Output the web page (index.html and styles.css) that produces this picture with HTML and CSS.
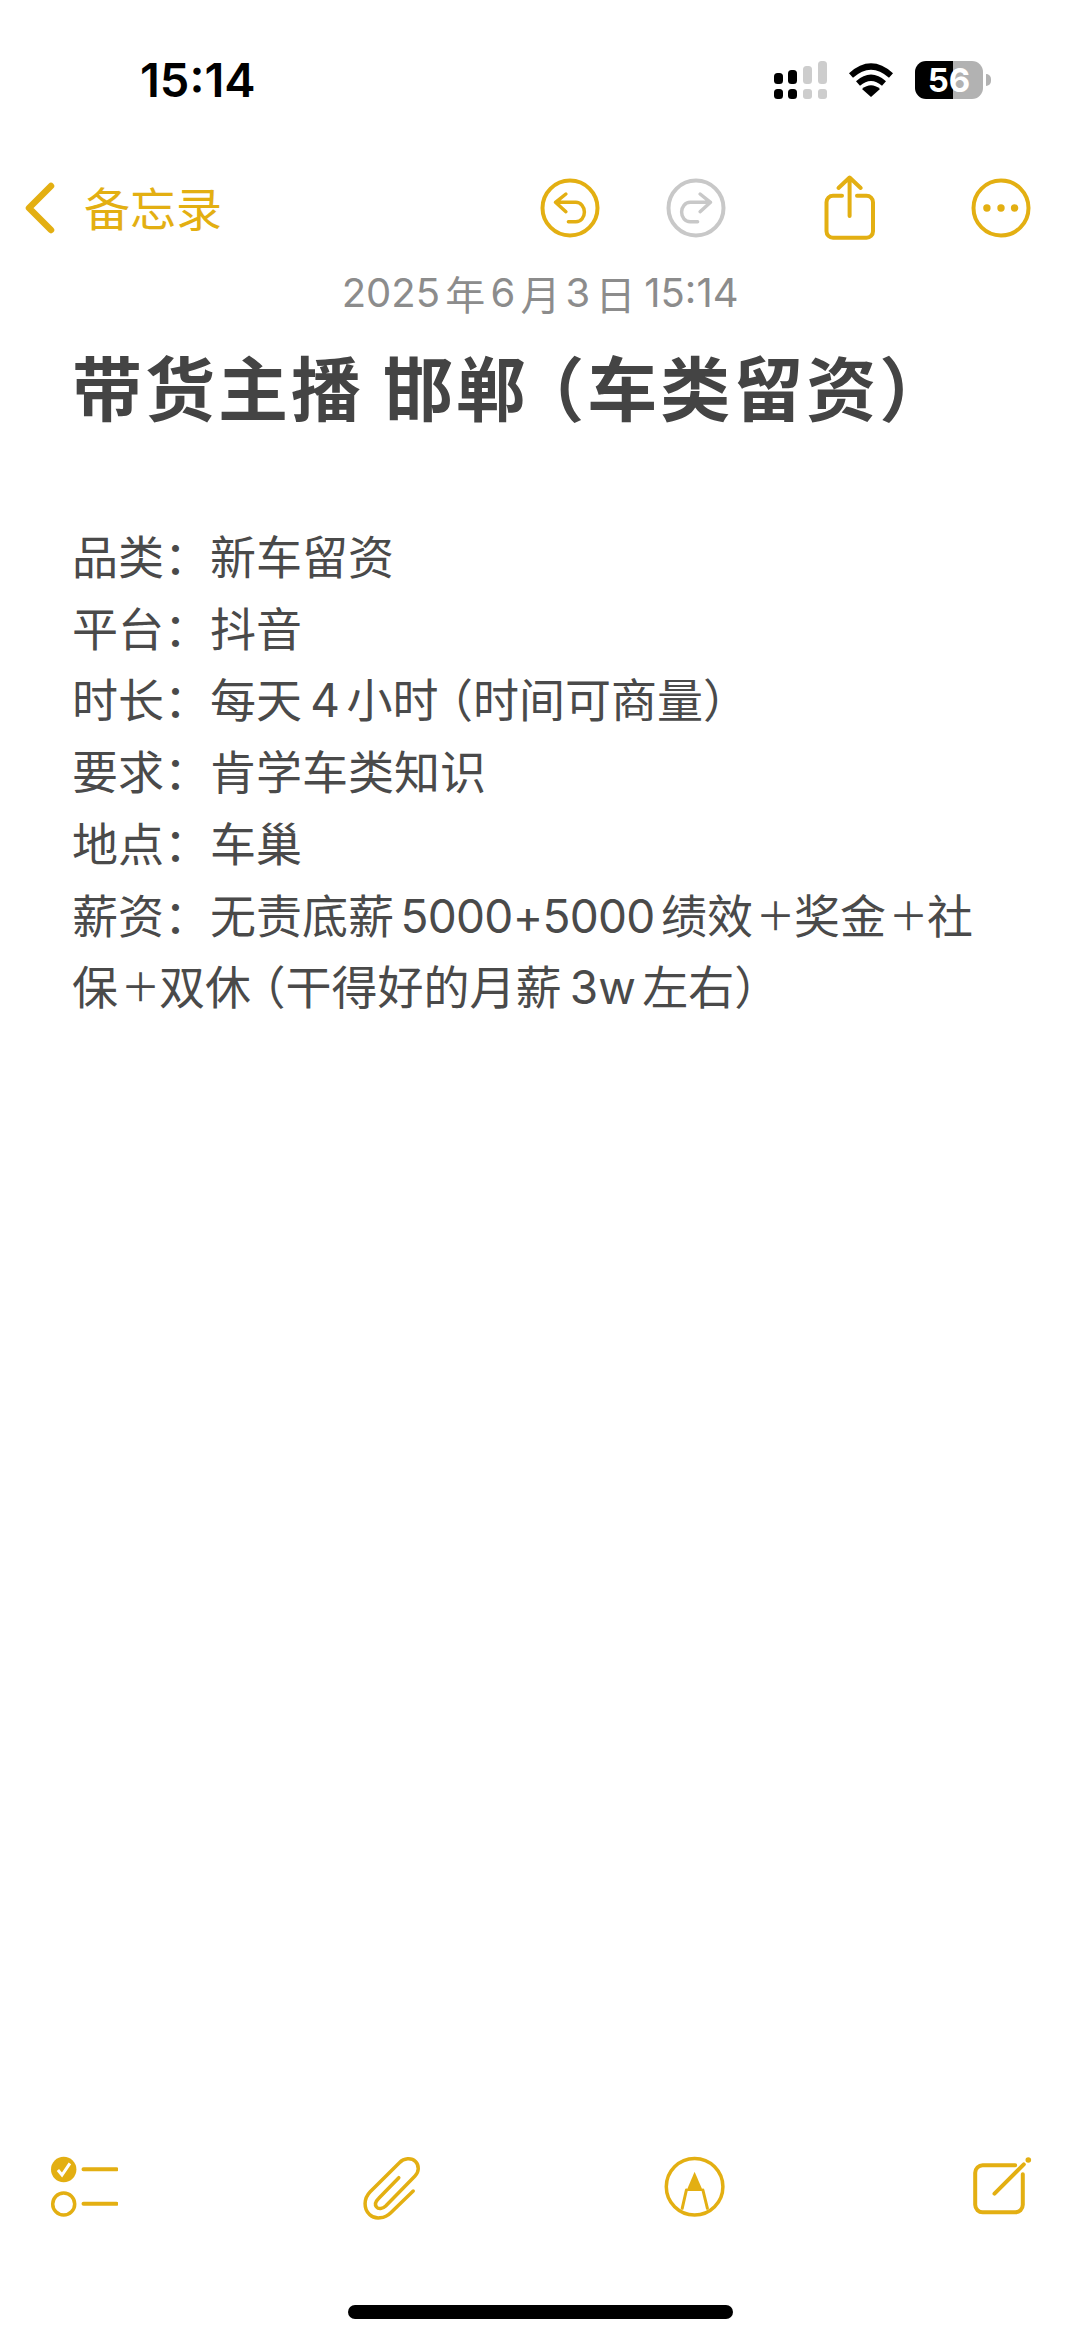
FILE: index.html
```html
<!DOCTYPE html>
<html lang="zh-CN">
<head>
<meta charset="utf-8">
<title>备忘录</title>
<link rel="stylesheet" href="styles.css">
</head>
<body>
<div class="screen">
  <header class="status">
    <span class="clock">15:14</span>
    <div class="indicators">
      <svg class="signal" width="54" height="40" viewBox="0 0 54 40">
        <rect x="0" y="12" width="9" height="11" rx="3.5"/>
        <rect x="14" y="9" width="9" height="14" rx="3.5"/>
        <rect class="dim" x="29" y="5" width="9" height="18" rx="3.5"/>
        <rect class="dim" x="44" y="0" width="9" height="23" rx="3.5"/>
        <rect x="0" y="28" width="9" height="10" rx="3.5"/>
        <rect x="14" y="28" width="9" height="10" rx="3.5"/>
        <rect class="dim" x="29" y="28" width="9" height="10" rx="3"/>
        <rect class="dim" x="44" y="28" width="9" height="10" rx="3"/>
      </svg>
      <svg class="wifi" width="46" height="34" viewBox="0 0 46 34">
        <path d="M3 12.5Q23 -5.5 43 12.5" fill="none" stroke="#000" stroke-width="6"/>
        <path d="M10 20.5Q23 9 36 20.5" fill="none" stroke="#000" stroke-width="6"/>
        <path d="M23 34L14 26Q23 18.500 32 26Z"/>
      </svg>
      <div class="battery"><span class="level">56</span></div>
      <span class="battery-tip"></span>
    </div>
  </header>

  <nav class="nav">
    <div class="back">
      <svg width="32" height="52" viewBox="0 0 32 52"><path class="stroke" d="M27 4L5 26L27 48" stroke-width="6.500"/></svg>
      <span class="back-label">备忘录</span>
    </div>
    <div class="actions">
      <svg class="undo" width="60" height="60" viewBox="0 0 60 60">
        <circle class="stroke" cx="30" cy="30" r="27.500" stroke-width="4"/>
        <path class="stroke" stroke-width="3.500" d="M25.900 16L15.500 24.300L25.900 33.700M15.500 24.300H35.800C41 24.300 44.400 29 44.400 34C44.400 39.500 41 43.700 35.800 43.700H28.400"/>
      </svg>
      <svg class="redo" width="60" height="60" viewBox="0 0 60 60">
        <circle class="stroke-off" cx="30" cy="30" r="27.500" stroke-width="4"/>
        <path class="stroke-off" stroke-width="3.500" d="M34.100 16L44.500 24.300L34.100 33.700M44.500 24.300H24.200C19 24.300 15.600 29 15.600 34C15.600 39.500 19 43.700 24.200 43.700H31.600"/>
      </svg>
      <svg class="share" width="54" height="68" viewBox="0 0 54 68">
        <path class="stroke" stroke-width="4" d="M19 21.700H10A6.500 6.500 0 0 0 3.500 28.200V57.200A6.500 6.500 0 0 0 10 63.700H43.500A6.500 6.500 0 0 0 50 57.200V28.200A6.500 6.500 0 0 0 43.500 21.700H34"/>
        <path class="stroke" stroke-width="4" d="M26.600 4V42M15.500 14L26.600 3.500L37.700 14"/>
      </svg>
      <svg class="more" width="60" height="60" viewBox="0 0 60 60">
        <circle class="stroke" cx="30" cy="30" r="27.500" stroke-width="4"/>
        <circle class="fill" cx="15.900" cy="30" r="3.700"/>
        <circle class="fill" cx="30" cy="30" r="3.700"/>
        <circle class="fill" cx="43.600" cy="30" r="3.700"/>
      </svg>
    </div>
  </nav>

  <div class="date"><span class="num">2025</span>年<span class="num">6</span>月<span class="num">3</span>日<span class="num time">15:14</span></div>

  <h1 class="title">带货主播 邯郸<span class="open">（</span>车类留资）</h1>

  <main class="note">
    <p>品类<span class="colon">：</span>新车留资</p>
    <p>平台<span class="colon">：</span>抖音</p>
    <p>时长<span class="colon">：</span>每天<span class="num">4</span>小时<span class="open">（</span>时间可商量）</p>
    <p>要求<span class="colon">：</span>肯学车类知识</p>
    <p>地点<span class="colon">：</span>车巢</p>
    <p>薪资<span class="colon">：</span>无责底薪<span class="num figures">5000+5000</span>绩效<span class="plus">＋</span>奖金<span class="plus">＋</span>社保<span class="plus">＋</span>双休<span class="open">（</span>干得好的月薪<span class="num">3w</span>左右）</p>
  </main>

  <footer class="toolbar">
    <svg class="tool-list" width="68" height="62" viewBox="0 0 68 62">
      <circle class="fill" cx="13.700" cy="13.500" r="12.700"/>
      <path d="M7.900 14L12 19L19.900 7.300" fill="none" stroke="#fff" stroke-width="3"/>
      <circle class="stroke" cx="13.700" cy="48" r="11" stroke-width="3.500"/>
      <path class="stroke" stroke-width="4" d="M33.500 13.300H66.500M33.500 47.700H66.500"/>
    </svg>
    <svg class="tool-clip" width="60" height="66" viewBox="0 0 60 66">
      <path class="stroke" stroke-width="3.500" d="M51.200 35L28.800 56.700C23 62.500 13 64 7.500 58.500C1.500 53 1.500 42.500 8.200 35.700L37.400 6.700C42 2 49.500 1.500 53.500 5.500C57.500 9.500 57 16 53 20L23.700 50C20.500 53 16.500 53.500 14.500 51C12.500 48.500 13.500 45.500 16.800 42.300L36.800 21.700"/>
    </svg>
    <svg class="tool-markup" width="62" height="62" viewBox="0 0 62 62">
      <circle class="stroke" cx="30.600" cy="30.700" r="28.300" stroke-width="3.500"/>
      <path class="fill" d="M30.600 15.700L38.900 35H22.400Z"/>
      <path class="stroke" stroke-width="3" d="M22.400 34L18.200 52.300M38.900 34L43.400 52.300"/>
    </svg>
    <svg class="tool-compose" width="62" height="60" viewBox="0 0 62 60">
      <path class="stroke" stroke-width="4" d="M43.200 9.300H11A7.500 7.500 0 0 0 3.200 16.800V48.800A7.500 7.500 0 0 0 11 56.300H43A7.500 7.500 0 0 0 50.800 48.800V18.300"/>
      <path class="stroke" stroke-width="4" d="M22.500 37.700L51.800 8.300"/>
      <circle class="fill" cx="56.300" cy="4" r="2.800"/>
    </svg>
  </footer>

  <div class="home-row"><span class="home-bar"></span></div>
</div>
</body>
</html>
```

FILE: styles.css
```css
* { box-sizing: border-box; }

html, body { margin: 0; padding: 0; background: #fff; }

.screen {
  width: 1080px;
  height: 2341px;
  display: flex;
  flex-direction: column;
  overflow: hidden;
  font-family: "Noto Sans CJK SC", "Liberation Sans", sans-serif;
  background: #fff;
}

/* status bar */
.status {
  height: 160px;
  flex: none;
  display: flex;
  align-items: flex-start;
  justify-content: space-between;
  padding: 50px 89px 0 140px;
}

.clock {
  font-family: Inter, sans-serif;
  font-size: 47px;
  line-height: 60px;
  font-weight: 600;
  color: #000;
}

.indicators {
  display: flex;
  align-items: flex-start;
  padding-top: 11px;
}

.signal { fill: #000; margin-right: 20px; }
.signal .dim { fill: #cdcdcd; }
.wifi { fill: #000; margin: 2px 21px 0 0; }

.battery {
  width: 68px;
  height: 38px;
  border-radius: 11px;
  background: linear-gradient(90deg, #000 0 56%, #b2b2b2 56% 100%);
  display: flex;
  align-items: center;
  justify-content: center;
}

.level {
  font-family: Inter, sans-serif;
  font-size: 33px;
  line-height: 38px;
  font-weight: 700;
  color: #fff;
}

.battery-tip {
  width: 5px;
  height: 12px;
  margin: 13px 0 0 3px;
  border-radius: 0 5px 5px 0;
  background: #b2b2b2;
}

/* note navigation */
.nav {
  height: 96px;
  flex: none;
  display: flex;
  align-items: center;
  justify-content: space-between;
  padding: 0 49px 0 24px;
}

.back { display: flex; align-items: center; }

.back-label {
  margin: 0 0 4px 28px;
  font-size: 46px;
  line-height: 60px;
  color: #e3af12;
}

.actions { display: flex; align-items: center; }
.redo { margin-left: 66px; }
.share { margin-left: 97px; }
.more { margin-left: 94px; }

.stroke, .stroke-off {
  fill: none;
  stroke-linecap: round;
  stroke-linejoin: round;
}
.stroke { stroke: #e3af12; }
.stroke-off { stroke: #c8c8c8; }
.fill { fill: #e3af12; }

/* note header */
.date {
  height: 74px;
  flex: none;
  display: flex;
  align-items: center;
  justify-content: center;
  padding-right: 5px;
  font-size: 40px;
  color: #8c8c8c;
}

.num {
  font-family: Inter, sans-serif;
  line-height: 0;
  margin: 0 0.14em 0 0.18em;
}

.date .num { margin: 0 0.13em; }
.date .time { margin: 0 0 0 0.22em; }

.title {
  height: 124px;
  flex: none;
  margin: 0;
  padding-left: 72px;
  font-size: 70px;
  line-height: 112px;
  font-weight: 700;
  letter-spacing: 3px;
  white-space: nowrap;
  color: #444;
}

.open { margin-left: -0.21em; }

/* note body */
.note {
  flex: none;
  padding: 65px 80px 0 72px;
  font-size: 46px;
  line-height: 71.700px;
  color: #4a4a4a;
}

.note p { margin: 0; }
.note .open { margin-left: -0.25em; }

.note .figures {
  margin: 0 0.14em;
  letter-spacing: -0.7px;
}

.colon {
  font-family: "Noto Sans CJK TC", sans-serif;
  line-height: 0;
}

.plus {
  display: inline-block;
  width: 41px;
  line-height: 0;
  text-align: center;
  transform: scale(0.85);
}

/* bottom tools */
.toolbar {
  margin-top: auto;
  flex: none;
  display: flex;
  align-items: flex-start;
  height: 149px;
  padding-left: 50px;
}

.tool-clip { margin-left: 244px; }
.tool-markup { margin-left: 242px; }
.tool-compose { margin-left: 246px; }

.home-row {
  height: 36px;
  flex: none;
  display: flex;
  justify-content: center;
}

.home-bar {
  width: 385px;
  height: 14px;
  border-radius: 7px;
  background: #000;
}
```
